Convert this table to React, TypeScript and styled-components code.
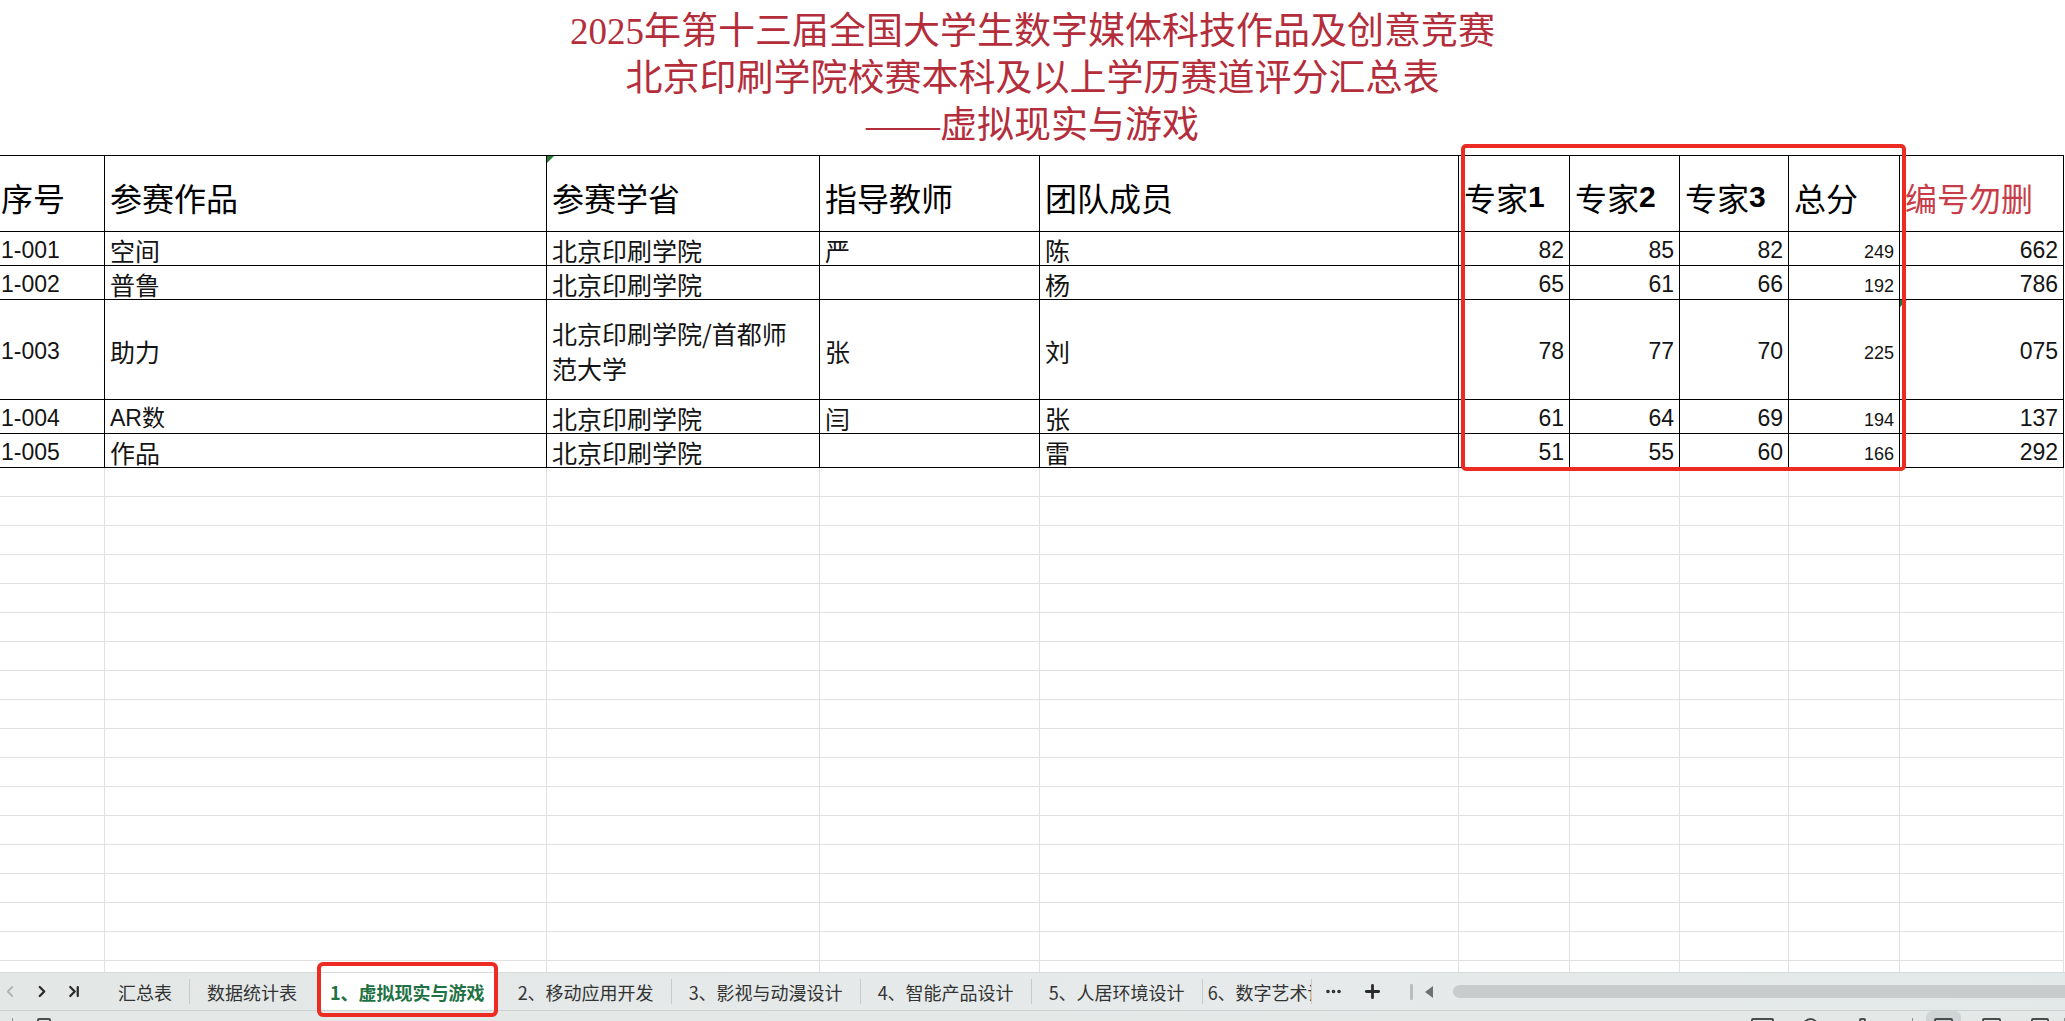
import React from "react";
import styled, { createGlobalStyle, css } from "styled-components";
import { ChevronLeft, ChevronRight, ChevronLast, MoreHorizontal, Plus } from "lucide-react";

const GlobalStyle = createGlobalStyle`
  html, body { margin: 0; padding: 0; background: #ffffff; }
  body { font-family: "Noto Sans CJK SC", "Noto Sans", sans-serif; }
  #root { width: 2065px; height: 1021px; overflow: hidden; }
`;

const COLS = "105px 442px 273px 220px 419px 111px 110px 109px 111px 164px";
const CJK = `"Noto Sans CJK SC", "Noto Sans", sans-serif`;
const LATIN = `"Liberation Sans", "Noto Sans CJK SC", sans-serif`;

const Window = styled.div`
  width: 2065px;
  height: 1021px;
  display: flex;
  flex-direction: column;
  overflow: hidden;
  background: #fff;
`;

const Sheet = styled.div`
  position: relative;
  flex: none;
  height: 972px;
  overflow: hidden;
`;

const Title = styled.div`
  box-sizing: border-box;
  height: 155px;
  padding-top: 8px;
  text-align: center;
  font-family: "Liberation Serif", "Noto Sans CJK SC", serif;
  font-size: 37px;
  line-height: 47px;
  color: #b42d3b;
`;

const TitleLine = styled.div`
  white-space: nowrap;
`;

const Table = styled.div`
  width: 2064px;
  border-top: 1px solid #000;
`;

const Row = styled.div<{ $h: number }>`
  display: grid;
  grid-template-columns: ${COLS};
  grid-template-rows: ${(p) => p.$h}px;
  height: ${(p) => p.$h}px;
`;

const flagMark = css`
  &::before {
    content: "";
    position: absolute;
    left: 0;
    top: 0;
    border-top: 7px solid #1f7a35;
    border-right: 7px solid transparent;
  }
`;

const Cell = styled.div<{
  $first?: boolean;
  $latin?: boolean;
  $right?: boolean;
  $small?: boolean;
  $flag?: boolean;
}>`
  position: relative;
  box-sizing: border-box;
  min-height: 0;
  display: flex;
  align-items: center;
  justify-content: ${(p) => (p.$right ? "flex-end" : "flex-start")};
  padding: ${(p) => (p.$small ? 7 : 3)}px 5px 0 ${(p) => (p.$first ? 1 : 5)}px;
  border-right: 1px solid #000;
  border-bottom: 1px solid #000;
  font-family: ${(p) => (p.$latin ? LATIN : CJK)};
  font-size: ${(p) => (p.$small ? 18 : p.$latin ? 23 : 25)}px;
  line-height: 28px;
  color: #141414;
  white-space: nowrap;
  ${(p) => p.$flag && flagMark}
`;

const HeadCell = styled(Cell)<{ $red?: boolean }>`
  padding-top: 6px;
  font-family: ${CJK};
  font-size: 32px;
  line-height: 40px;
  color: ${(p) => (p.$red ? "#c83c49" : "#000")};
`;

const Digit = styled.span`
  font-family: "Liberation Sans", sans-serif;
  font-weight: 700;
  font-size: 30px;
`;

const Wrap = styled.div`
  white-space: normal;
  line-height: 35px;
`;

const EmptyCell = styled.div`
  box-sizing: border-box;
  border-right: 1px solid #e1e1e1;
  border-bottom: 1px solid #e1e1e1;
`;

const Highlight = styled.div`
  position: absolute;
  left: 1461px;
  top: 144px;
  width: 445px;
  height: 327px;
  box-sizing: border-box;
  border: 4px solid #ec2b23;
  border-radius: 5px;
  pointer-events: none;
`;

/* ---------- bottom sheet tabs ---------- */

const TabBar = styled.div`
  position: relative;
  flex: none;
  box-sizing: border-box;
  height: 38px;
  display: flex;
  align-items: center;
  background: linear-gradient(90deg, #e3e8e7 0%, #e6eaea 60%, #e3e9e8 100%);
  border-top: 1px solid #d6dada;
  white-space: nowrap;
`;

const NavGroup = styled.div`
  flex: none;
  width: 101px;
  height: 100%;
  box-sizing: border-box;
  padding-left: 1px;
  display: flex;
  align-items: center;
  gap: 14px;
`;

const NavIcon = styled.span<{ $dim?: boolean }>`
  display: flex;
  width: 18px;
  justify-content: center;
  color: ${(p) => (p.$dim ? "#aeb3b3" : "#2a2a2a")};
`;

const Tab = styled.div<{ $active?: boolean; $clip?: number }>`
  position: relative;
  flex: none;
  box-sizing: border-box;
  height: 100%;
  display: flex;
  align-items: center;
  padding: 0 ${(p) => (p.$active ? 12 : 17)}px;
  margin: 0 ${(p) => (p.$active ? 4 : 0)}px;
  font-family: ${CJK};
  font-size: 18px;
  color: #333;
  ${(p) =>
    p.$active &&
    css`
      background: #ffffff;
      color: #1f7244;
      font-weight: 700;
    `}
  ${(p) =>
    p.$clip &&
    css`
      width: ${p.$clip}px;
      padding-left: 5px;
      padding-right: 0;
      overflow: hidden;
    `}
`;

const TabMark = styled.div`
  position: absolute;
  left: -1px;
  right: -1px;
  top: -11px;
  bottom: -7px;
  border: 4px solid #ec2b23;
  border-radius: 6px;
  pointer-events: none;
`;

const TabSep = styled.span`
  flex: none;
  width: 1px;
  height: 25px;
  background: #c6cbcb;
`;

const BarIcon = styled.span<{ $ml: number }>`
  flex: none;
  display: flex;
  align-items: center;
  margin-left: ${(p) => p.$ml}px;
  color: #2b2b2b;
`;

const TinyBar = styled.span`
  flex: none;
  width: 3px;
  height: 16px;
  margin-left: 27px;
  background: #b9bebe;
  border-radius: 1px;
`;

const LeftCaret = styled.span`
  flex: none;
  width: 0;
  height: 0;
  margin-left: 12px;
  border-top: 6px solid transparent;
  border-bottom: 6px solid transparent;
  border-right: 8px solid #6d7171;
`;

const Thumb = styled.div`
  flex: 1;
  height: 13px;
  margin-left: 20px;
  margin-right: -20px;
  border-radius: 7px;
  background: #c8cccc;
`;

/* ---------- status bar ---------- */

const StatusBar = styled.div`
  flex: none;
  box-sizing: border-box;
  height: 11px;
  display: flex;
  align-items: flex-start;
  overflow: hidden;
  background: #e4e9e8;
  border-top: 1px solid #ccd1d1;
`;

const StatusItem = styled.span<{ $w: number; $ml: number; $round?: boolean; $top?: number }>`
  flex: none;
  box-sizing: border-box;
  width: ${(p) => p.$w}px;
  height: 18px;
  margin-left: ${(p) => p.$ml}px;
  margin-top: ${(p) => p.$top ?? 7}px;
  border: 2px solid #4a4d4d;
  border-radius: ${(p) => (p.$round ? "50%" : "2px")};
`;

const StatusLine = styled.span<{ $ml: number }>`
  flex: none;
  width: 1px;
  height: 18px;
  margin-top: 7px;
  margin-left: ${(p) => p.$ml}px;
  background: #8e9292;
`;

const StatusSpacer = styled.span`
  flex: 1;
`;

const StatusActive = styled.span`
  flex: none;
  display: flex;
  justify-content: center;
  width: 35px;
  height: 24px;
  margin-left: 13px;
  border-radius: 6px;
  background: #cfd4d4;
`;

type Entry = {
  id: string;
  work: string;
  latinWork?: boolean;
  school: React.ReactNode;
  teacher: string;
  member: string;
  scores: [number, number, number];
  total: number;
  code: string;
  h: number;
};

const rows: Entry[] = [
  { id: "1-001", work: "空间", school: "北京印刷学院", teacher: "严", member: "陈", scores: [82, 85, 82], total: 249, code: "662", h: 34 },
  { id: "1-002", work: "普鲁", school: "北京印刷学院", teacher: "", member: "杨", scores: [65, 61, 66], total: 192, code: "786", h: 34 },
  {
    id: "1-003",
    work: "助力",
    school: (
      <Wrap>
        北京印刷学院/首都师
        <br />
        范大学
      </Wrap>
    ),
    teacher: "张",
    member: "刘",
    scores: [78, 77, 70],
    total: 225,
    code: "075",
    h: 100,
  },
  { id: "1-004", work: "AR数", latinWork: true, school: "北京印刷学院", teacher: "闫", member: "张", scores: [61, 64, 69], total: 194, code: "137", h: 34 },
  { id: "1-005", work: "作品", school: "北京印刷学院", teacher: "", member: "雷", scores: [51, 55, 60], total: 166, code: "292", h: 34 },
];

const tabs = ["2、移动应用开发", "3、影视与动漫设计", "4、智能产品设计", "5、人居环境设计"];

export default function App() {
  return (
    <>
      <GlobalStyle />
      <Window>
        <Sheet>
          <Title>
            <TitleLine>2025年第十三届全国大学生数字媒体科技作品及创意竞赛</TitleLine>
            <TitleLine>北京印刷学院校赛本科及以上学历赛道评分汇总表</TitleLine>
            <TitleLine>——虚拟现实与游戏</TitleLine>
          </Title>
          <Table>
            <Row $h={76}>
              <HeadCell $first>序号</HeadCell>
              <HeadCell>参赛作品</HeadCell>
              <HeadCell $flag>参赛学省</HeadCell>
              <HeadCell>指导教师</HeadCell>
              <HeadCell>团队成员</HeadCell>
              <HeadCell>
                专家<Digit>1</Digit>
              </HeadCell>
              <HeadCell>
                专家<Digit>2</Digit>
              </HeadCell>
              <HeadCell>
                专家<Digit>3</Digit>
              </HeadCell>
              <HeadCell>总分</HeadCell>
              <HeadCell $red>编号勿删</HeadCell>
            </Row>
            {rows.map((r, i) => (
              <Row $h={r.h} key={r.id}>
                <Cell $first $latin>
                  {r.id}
                </Cell>
                <Cell $latin={r.latinWork}>{r.work}</Cell>
                <Cell>{r.school}</Cell>
                <Cell>{r.teacher}</Cell>
                <Cell>{r.member}</Cell>
                {r.scores.map((s, k) => (
                  <Cell $latin $right key={k}>
                    {s}
                  </Cell>
                ))}
                <Cell $latin $right $small>
                  {r.total}
                </Cell>
                <Cell $latin $right $flag={i === 2}>
                  {r.code}
                </Cell>
              </Row>
            ))}
          </Table>
          {Array.from({ length: 18 }).map((_, i) => (
            <Row $h={29} key={i}>
              {Array.from({ length: 10 }).map((__, k) => (
                <EmptyCell key={k} />
              ))}
            </Row>
          ))}
          <Highlight />
        </Sheet>

        <TabBar>
          <NavGroup>
            <NavIcon $dim>
              <ChevronLeft size={19} strokeWidth={2.4} />
            </NavIcon>
            <NavIcon>
              <ChevronRight size={19} strokeWidth={3} />
            </NavIcon>
            <NavIcon>
              <ChevronLast size={19} strokeWidth={3} />
            </NavIcon>
          </NavGroup>
          <Tab>汇总表</Tab>
          <TabSep />
          <Tab>数据统计表</Tab>
          <Tab $active>
            1、虚拟现实与游戏
            <TabMark />
          </Tab>
          {tabs.map((t, i) => (
            <React.Fragment key={t}>
              {i > 0 && <TabSep />}
              <Tab>{t}</Tab>
            </React.Fragment>
          ))}
          <TabSep />
          <Tab $clip={108}>6、数字艺术设计</Tab>
          <TabSep />
          <BarIcon $ml={12}>
            <MoreHorizontal size={19} strokeWidth={2.6} />
          </BarIcon>
          <BarIcon $ml={19}>
            <Plus size={21} strokeWidth={3.2} />
          </BarIcon>
          <TinyBar />
          <LeftCaret />
          <Thumb />
        </TabBar>

        <StatusBar>
          <StatusLine $ml={12} />
          <StatusItem $w={14} $ml={24} />
          <StatusSpacer />
          <StatusItem $w={23} $ml={0} />
          <StatusItem $w={17} $ml={28} $round />
          <StatusItem $w={7} $ml={40} />
          <StatusLine $ml={46} />
          <StatusActive>
            <StatusItem $w={19} $ml={0} $top={7} />
          </StatusActive>
          <StatusItem $w={19} $ml={21} />
          <StatusItem $w={18} $ml={30} />
          <StatusLine $ml={15} />
        </StatusBar>
      </Window>
    </>
  );
}
